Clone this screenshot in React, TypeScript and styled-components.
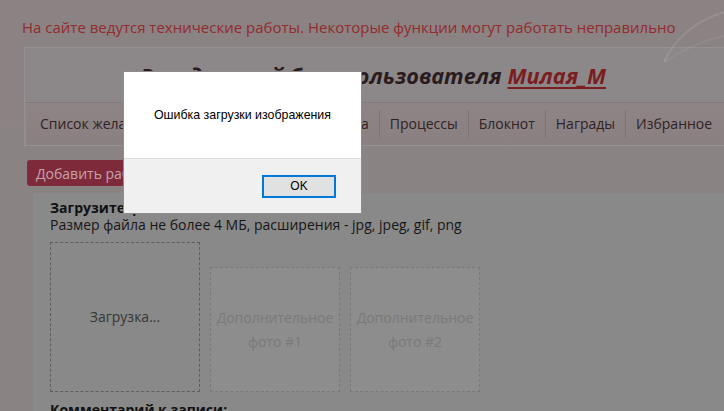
import styled, { createGlobalStyle } from 'styled-components';

const GlobalStyle = createGlobalStyle`
  html, body {
    margin: 0;
    padding: 0;
    background: #8a8384;
    overflow: hidden;
  }
  body {
    font-family: 'Open Sans', 'Noto Sans', sans-serif;
  }
`;

const Page = styled.div`
  position: relative;
  width: 724px;
  height: 411px;
  overflow: hidden;
  background: linear-gradient(180deg, #8b8283 0%, #8a8384 60%, #898384 100%);
`;

const Warning = styled.div`
  padding: 14px 0 0 22px;
  font-size: 15px;
  line-height: 26px;
  color: #942b2d;
  white-space: nowrap;
`;

const HeaderCard = styled.div`
  margin: 7px 0 0 24px;
  width: 712px;
  border: 1px solid #959091;
  background: #8c8788;
`;

const Title = styled.h1`
  margin: 0;
  height: 54px;
  display: flex;
  align-items: center;
  justify-content: center;
  padding-right: 16px;
  font-size: 21.6px;
  font-weight: 700;
  font-style: italic;
  color: #2a1c1e;
  border-bottom: 1px solid #827b7c;
  white-space: nowrap;

  a {
    margin-left: 6px;
    color: #7a1e22;
    text-decoration: underline;
    text-decoration-thickness: 2px;
    text-underline-offset: 3px;
  }
`;

const Nav = styled.nav`
  display: flex;
  align-items: center;
  height: 42px;
  margin: 0 2px;
  padding-left: 3px;
  background: linear-gradient(180deg, #8e8485 0%, #8b8081 100%);
`;

const NavItem = styled.span<{ $wide?: boolean }>`
  padding: 0 ${(p) => (p.$wide ? 11.5 : 10)}px;
  font-size: 14px;
  line-height: 28px;
  color: #2e2325;
  white-space: nowrap;
  & + & {
    border-left: 1px solid #7c7475;
  }
`;

const Toolbar = styled.div`
  display: flex;
  padding: 14px 0 7px 27px;
`;

const AddButton = styled.button`
  height: 26px;
  padding: 0 9px;
  border: none;
  border-radius: 3px;
  background: #7f2a3a;
  color: #c6a2a9;
  font-family: 'Open Sans', 'Noto Sans', sans-serif;
  font-size: 14px;
  white-space: nowrap;
`;

const Content = styled.section`
  margin-left: 33px;
  padding: 6px 0 0 17px;
  height: 260px;
  background: #898989;
  color: #161616;
  font-size: 14px;
  line-height: 17px;
`;

const Label = styled.div`
  font-weight: 700;
  color: #111;
`;

const Hint = styled.div`
  margin-bottom: 9px;
`;

const Uploads = styled.div`
  display: flex;
  align-items: flex-end;
  gap: 10px;
  margin-bottom: 9px;
`;

const UploadBox = styled.div<{ $main?: boolean }>`
  box-sizing: border-box;
  width: ${(p) => (p.$main ? 150 : 130)}px;
  height: ${(p) => (p.$main ? 150 : 125)}px;
  display: flex;
  align-items: center;
  justify-content: center;
  text-align: center;
  border: 1px dashed ${(p) => (p.$main ? '#5e5e5e' : '#7a7a7a')};
  background: ${(p) => (p.$main ? '#898989' : '#8d8d8d')};
  color: ${(p) => (p.$main ? '#363636' : '#7a7a7a')};
  font-size: 14px;
  line-height: 24px;
`;

const Swoosh = styled.svg`
  position: absolute;
  top: 0;
  right: 0;
  pointer-events: none;
`;

const Dialog = styled.div`
  position: fixed;
  left: 123px;
  top: 71px;
  width: 239px;
  box-sizing: border-box;
  border: 1px solid #8d8d8d;
  background: #fff;
  font-family: 'Liberation Sans', Arial, sans-serif;
  font-size: 12.4px;
  color: #000;
`;

const DialogBody = styled.div`
  height: 86px;
  display: flex;
  align-items: center;
  justify-content: center;
`;

const DialogFooter = styled.div`
  height: 54px;
  display: flex;
  align-items: center;
  justify-content: flex-end;
  padding-right: 25px;
  border-top: 1px solid #dfdfdf;
  background: #f0f0f0;
`;

const OkButton = styled.button`
  width: 74px;
  height: 23px;
  box-sizing: border-box;
  border: 2px solid #0078d7;
  background: #e1e1e1;
  font-family: 'Liberation Sans', Arial, sans-serif;
  font-size: 12px;
  color: #000;
`;

export default function App() {
  return (
    <Page>
      <GlobalStyle />
      <Swoosh width="90" height="70" viewBox="0 0 90 70">
        <path d="M30 62 C40 40 60 22 90 12" fill="none" stroke="rgba(255,255,255,0.1)" strokeWidth="2" />
        <path d="M30 62 C48 50 70 40 90 36" fill="none" stroke="rgba(255,255,255,0.06)" strokeWidth="2" />
      </Swoosh>
      <Warning>На сайте ведутся технические работы. Некоторые функции могут работать неправильно</Warning>
      <HeaderCard>
        <Title>
          Рукодельный блог пользователя <a>Милая_М</a>
        </Title>
        <Nav>
          <NavItem>Список желаний</NavItem>
          <NavItem $wide>Мои запасы</NavItem>
          <NavItem>Моя копилка</NavItem>
          <NavItem>Процессы</NavItem>
          <NavItem>Блокнот</NavItem>
          <NavItem>Награды</NavItem>
          <NavItem>Избранное</NavItem>
        </Nav>
      </HeaderCard>
      <Toolbar>
        <AddButton>Добавить работу</AddButton>
      </Toolbar>
      <Content>
        <Label>Загрузите фото</Label>
        <Hint>Размер файла не более 4 МБ, расширения - jpg, jpeg, gif, png</Hint>
        <Uploads>
          <UploadBox $main>Загрузка...</UploadBox>
          <UploadBox>Дополнительное<br />фото #1</UploadBox>
          <UploadBox>Дополнительное<br />фото #2</UploadBox>
        </Uploads>
        <Label>Комментарий к записи:</Label>
      </Content>
      <Dialog>
        <DialogBody>Ошибка загрузки изображения</DialogBody>
        <DialogFooter>
          <OkButton>OK</OkButton>
        </DialogFooter>
      </Dialog>
    </Page>
  );
}
